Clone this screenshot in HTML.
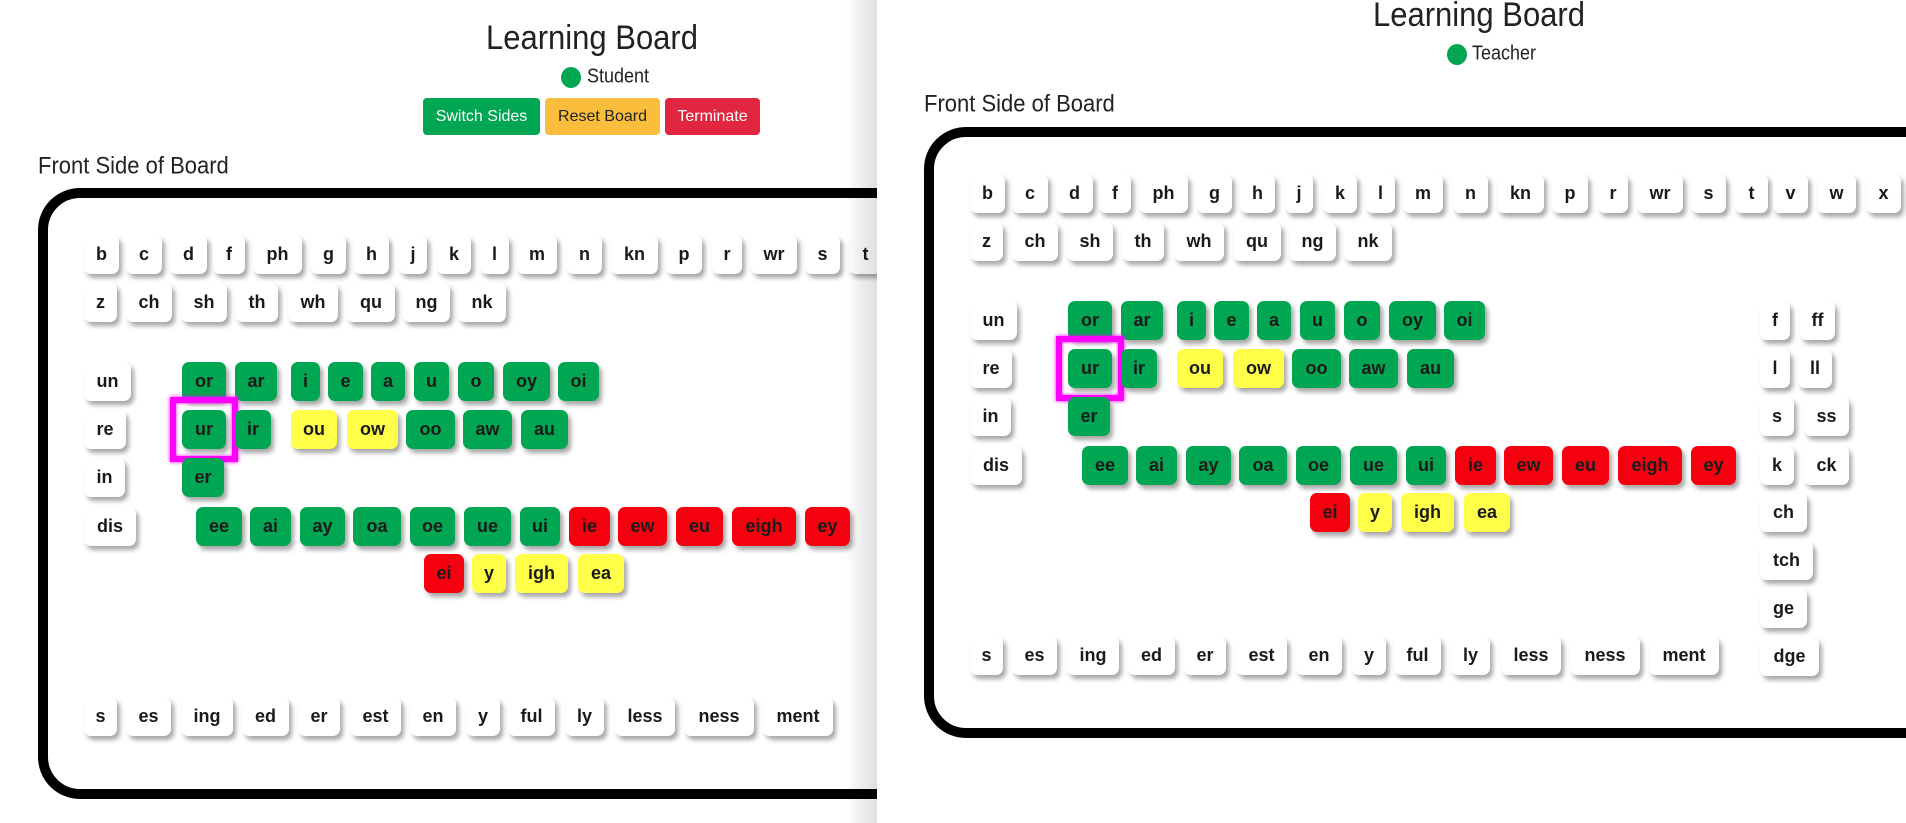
<!DOCTYPE html>
<html><head><meta charset="utf-8"><style>
*{margin:0;padding:0;box-sizing:border-box}
body{width:1906px;height:823px;overflow:hidden;background:#fff;font-family:"Liberation Sans",Arial,sans-serif;color:#222;position:relative}
.panel{position:absolute;top:0;height:823px;overflow:hidden;background:#fff}
.title{position:absolute;font-size:31px;white-space:nowrap;transform:translateX(-50%) scaleY(1.12);color:#222}
.dot{position:absolute;width:20px;height:21px;border-radius:50%;background:#00a651}
.role{position:absolute;font-size:18px;transform:scaleY(1.12);transform-origin:left center}
.btn{position:absolute;top:98px;height:37px;line-height:37px;text-align:center;font-size:16px;border-radius:4px;color:#fff}
.lbl{position:absolute;font-size:22px;transform:scaleY(1.1);transform-origin:left center;white-space:nowrap}
.board{position:absolute;border:10px solid #000;border-radius:42px;width:1100px;height:611px;background:#fff}
.t{position:absolute;height:39px;line-height:39px;text-align:center;font-weight:bold;font-size:18px;border-radius:7px;background:#fff;box-shadow:3px 4px 5px rgba(0,0,0,.35);color:#1a1a1a;white-space:nowrap}
.g{background:#00a651}.y{background:#ffff4a}.r{background:#f5000f}
.hl{position:absolute;left:122px;top:199px;width:68px;height:65px;border:6px solid #ff00ff;box-shadow:0 0 4px #ff00ff, inset 0 0 3px #ff00ff}
</style></head><body>

<div class="panel" style="left:0;width:877px">
  <div class="title" style="left:592px;top:20px">Learning Board</div>
  <div class="dot" style="left:561px;top:67px"></div>
  <div class="role" style="left:587px;top:66px">Student</div>
  <div class="btn" style="left:423px;width:117px;background:#00a651">Switch Sides</div>
  <div class="btn" style="left:545px;width:115px;background:#fbbd3c;color:#222">Reset Board</div>
  <div class="btn" style="left:665px;width:95px;background:#e3263f">Terminate</div>
  <div class="lbl" style="left:38px;top:153px">Front Side of Board</div>
  <div class="board" style="left:38px;top:188px">
<div class="t" style="left:36px;top:37px;width:35px">b</div><div class="t" style="left:78px;top:37px;width:36px">c</div><div class="t" style="left:122px;top:37px;width:37px">d</div><div class="t" style="left:165px;top:37px;width:32px">f</div><div class="t" style="left:205px;top:37px;width:49px">ph</div><div class="t" style="left:263px;top:37px;width:35px">g</div><div class="t" style="left:306px;top:37px;width:35px">h</div><div class="t" style="left:351px;top:37px;width:28px">j</div><div class="t" style="left:389px;top:37px;width:34px">k</div><div class="t" style="left:432px;top:37px;width:29px">l</div><div class="t" style="left:469px;top:37px;width:40px">m</div><div class="t" style="left:519px;top:37px;width:35px">n</div><div class="t" style="left:563px;top:37px;width:47px">kn</div><div class="t" style="left:618px;top:37px;width:36px">p</div><div class="t" style="left:664px;top:37px;width:30px">r</div><div class="t" style="left:703px;top:37px;width:46px">wr</div><div class="t" style="left:757px;top:37px;width:35px">s</div><div class="t" style="left:801px;top:37px;width:33px">t</div><div class="t" style="left:839px;top:37px;width:35px">v</div><div class="t" style="left:883px;top:37px;width:39px">w</div><div class="t" style="left:932px;top:37px;width:35px">x</div><div class="t" style="left:976px;top:37px;width:35px">y</div><div class="t" style="left:1020px;top:37px;width:35px">z</div>
<div class="t" style="left:36px;top:85px;width:33px">z</div><div class="t" style="left:78px;top:85px;width:46px">ch</div><div class="t" style="left:133px;top:85px;width:46px">sh</div><div class="t" style="left:188px;top:85px;width:42px">th</div><div class="t" style="left:240px;top:85px;width:50px">wh</div><div class="t" style="left:299px;top:85px;width:48px">qu</div><div class="t" style="left:355px;top:85px;width:47px">ng</div><div class="t" style="left:410px;top:85px;width:48px">nk</div>
<div class="t" style="left:36px;top:164px;width:47px">un</div><div class="t" style="left:36px;top:212px;width:42px">re</div><div class="t" style="left:36px;top:260px;width:41px">in</div><div class="t" style="left:36px;top:309px;width:52px">dis</div>
<div class="t g" style="left:134px;top:164px;width:44px">or</div><div class="t g" style="left:187px;top:164px;width:42px">ar</div><div class="t g" style="left:243px;top:164px;width:29px">i</div><div class="t g" style="left:280px;top:164px;width:35px">e</div><div class="t g" style="left:323px;top:164px;width:34px">a</div><div class="t g" style="left:366px;top:164px;width:35px">u</div><div class="t g" style="left:410px;top:164px;width:36px">o</div><div class="t g" style="left:455px;top:164px;width:47px">oy</div><div class="t g" style="left:510px;top:164px;width:41px">oi</div>
<div class="hl"></div>
<div class="t g" style="left:134px;top:212px;width:44px">ur</div><div class="t g" style="left:187px;top:212px;width:36px">ir</div><div class="t y" style="left:243px;top:212px;width:46px">ou</div><div class="t y" style="left:299px;top:212px;width:51px">ow</div><div class="t g" style="left:358px;top:212px;width:49px">oo</div><div class="t g" style="left:415px;top:212px;width:49px">aw</div><div class="t g" style="left:473px;top:212px;width:47px">au</div>
<div class="t g" style="left:134px;top:260px;width:42px">er</div>
<div class="t g" style="left:148px;top:309px;width:46px">ee</div><div class="t g" style="left:202px;top:309px;width:41px">ai</div><div class="t g" style="left:252px;top:309px;width:45px">ay</div><div class="t g" style="left:305px;top:309px;width:48px">oa</div><div class="t g" style="left:362px;top:309px;width:45px">oe</div><div class="t g" style="left:416px;top:309px;width:47px">ue</div><div class="t g" style="left:472px;top:309px;width:40px">ui</div><div class="t r" style="left:521px;top:309px;width:41px">ie</div><div class="t r" style="left:570px;top:309px;width:49px">ew</div><div class="t r" style="left:628px;top:309px;width:47px">eu</div><div class="t r" style="left:684px;top:309px;width:64px">eigh</div><div class="t r" style="left:757px;top:309px;width:45px">ey</div>
<div class="t r" style="left:376px;top:356px;width:40px">ei</div><div class="t y" style="left:424px;top:356px;width:34px">y</div><div class="t y" style="left:467px;top:356px;width:53px">igh</div><div class="t y" style="left:530px;top:356px;width:46px">ea</div>
<div class="t" style="left:36px;top:499px;width:33px">s</div><div class="t" style="left:78px;top:499px;width:45px">es</div><div class="t" style="left:133px;top:499px;width:52px">ing</div><div class="t" style="left:194px;top:499px;width:47px">ed</div><div class="t" style="left:250px;top:499px;width:42px">er</div><div class="t" style="left:302px;top:499px;width:51px">est</div><div class="t" style="left:362px;top:499px;width:46px">en</div><div class="t" style="left:418px;top:499px;width:34px">y</div><div class="t" style="left:460px;top:499px;width:47px">ful</div><div class="t" style="left:517px;top:499px;width:39px">ly</div><div class="t" style="left:567px;top:499px;width:60px">less</div><div class="t" style="left:636px;top:499px;width:70px">ness</div><div class="t" style="left:715px;top:499px;width:70px">ment</div>
  </div>
  <div style="position:absolute;left:845px;top:0;width:32px;height:823px;background:linear-gradient(to right,rgba(0,0,0,0),rgba(0,0,0,.13))"></div>
</div>

<div class="panel" style="left:877px;width:1029px">
  <div class="title" style="left:602px;top:-3px">Learning Board</div>
  <div class="dot" style="left:570px;top:44px"></div>
  <div class="role" style="left:595px;top:43px">Teacher</div>
  <div class="lbl" style="left:47px;top:91px">Front Side of Board</div>
  <div class="board" style="left:47px;top:127px">
<div class="t" style="left:36px;top:37px;width:35px">b</div><div class="t" style="left:78px;top:37px;width:36px">c</div><div class="t" style="left:122px;top:37px;width:37px">d</div><div class="t" style="left:165px;top:37px;width:32px">f</div><div class="t" style="left:205px;top:37px;width:49px">ph</div><div class="t" style="left:263px;top:37px;width:35px">g</div><div class="t" style="left:306px;top:37px;width:35px">h</div><div class="t" style="left:351px;top:37px;width:28px">j</div><div class="t" style="left:389px;top:37px;width:34px">k</div><div class="t" style="left:432px;top:37px;width:29px">l</div><div class="t" style="left:469px;top:37px;width:40px">m</div><div class="t" style="left:519px;top:37px;width:35px">n</div><div class="t" style="left:563px;top:37px;width:47px">kn</div><div class="t" style="left:618px;top:37px;width:36px">p</div><div class="t" style="left:664px;top:37px;width:30px">r</div><div class="t" style="left:703px;top:37px;width:46px">wr</div><div class="t" style="left:757px;top:37px;width:35px">s</div><div class="t" style="left:801px;top:37px;width:33px">t</div><div class="t" style="left:839px;top:37px;width:35px">v</div><div class="t" style="left:883px;top:37px;width:39px">w</div><div class="t" style="left:932px;top:37px;width:35px">x</div><div class="t" style="left:976px;top:37px;width:35px">y</div><div class="t" style="left:1020px;top:37px;width:35px">z</div>
<div class="t" style="left:36px;top:85px;width:33px">z</div><div class="t" style="left:78px;top:85px;width:46px">ch</div><div class="t" style="left:133px;top:85px;width:46px">sh</div><div class="t" style="left:188px;top:85px;width:42px">th</div><div class="t" style="left:240px;top:85px;width:50px">wh</div><div class="t" style="left:299px;top:85px;width:48px">qu</div><div class="t" style="left:355px;top:85px;width:47px">ng</div><div class="t" style="left:410px;top:85px;width:48px">nk</div>
<div class="t" style="left:36px;top:164px;width:47px">un</div><div class="t" style="left:36px;top:212px;width:42px">re</div><div class="t" style="left:36px;top:260px;width:41px">in</div><div class="t" style="left:36px;top:309px;width:52px">dis</div>
<div class="t g" style="left:134px;top:164px;width:44px">or</div><div class="t g" style="left:187px;top:164px;width:42px">ar</div><div class="t g" style="left:243px;top:164px;width:29px">i</div><div class="t g" style="left:280px;top:164px;width:35px">e</div><div class="t g" style="left:323px;top:164px;width:34px">a</div><div class="t g" style="left:366px;top:164px;width:35px">u</div><div class="t g" style="left:410px;top:164px;width:36px">o</div><div class="t g" style="left:455px;top:164px;width:47px">oy</div><div class="t g" style="left:510px;top:164px;width:41px">oi</div>
<div class="hl"></div>
<div class="t g" style="left:134px;top:212px;width:44px">ur</div><div class="t g" style="left:187px;top:212px;width:36px">ir</div><div class="t y" style="left:243px;top:212px;width:46px">ou</div><div class="t y" style="left:299px;top:212px;width:51px">ow</div><div class="t g" style="left:358px;top:212px;width:49px">oo</div><div class="t g" style="left:415px;top:212px;width:49px">aw</div><div class="t g" style="left:473px;top:212px;width:47px">au</div>
<div class="t g" style="left:134px;top:260px;width:42px">er</div>
<div class="t g" style="left:148px;top:309px;width:46px">ee</div><div class="t g" style="left:202px;top:309px;width:41px">ai</div><div class="t g" style="left:252px;top:309px;width:45px">ay</div><div class="t g" style="left:305px;top:309px;width:48px">oa</div><div class="t g" style="left:362px;top:309px;width:45px">oe</div><div class="t g" style="left:416px;top:309px;width:47px">ue</div><div class="t g" style="left:472px;top:309px;width:40px">ui</div><div class="t r" style="left:521px;top:309px;width:41px">ie</div><div class="t r" style="left:570px;top:309px;width:49px">ew</div><div class="t r" style="left:628px;top:309px;width:47px">eu</div><div class="t r" style="left:684px;top:309px;width:64px">eigh</div><div class="t r" style="left:757px;top:309px;width:45px">ey</div>
<div class="t r" style="left:376px;top:356px;width:40px">ei</div><div class="t y" style="left:424px;top:356px;width:34px">y</div><div class="t y" style="left:467px;top:356px;width:53px">igh</div><div class="t y" style="left:530px;top:356px;width:46px">ea</div>
<div class="t" style="left:826px;top:164px;width:30px">f</div><div class="t" style="left:866px;top:164px;width:35px">ff</div><div class="t" style="left:826px;top:212px;width:30px">l</div><div class="t" style="left:864px;top:212px;width:34px">ll</div><div class="t" style="left:826px;top:260px;width:34px">s</div><div class="t" style="left:870px;top:260px;width:45px">ss</div><div class="t" style="left:826px;top:309px;width:34px">k</div><div class="t" style="left:870px;top:309px;width:45px">ck</div><div class="t" style="left:826px;top:356px;width:47px">ch</div><div class="t" style="left:826px;top:404px;width:53px">tch</div><div class="t" style="left:826px;top:452px;width:47px">ge</div><div class="t" style="left:826px;top:500px;width:59px">dge</div>
<div class="t" style="left:36px;top:499px;width:33px">s</div><div class="t" style="left:78px;top:499px;width:45px">es</div><div class="t" style="left:133px;top:499px;width:52px">ing</div><div class="t" style="left:194px;top:499px;width:47px">ed</div><div class="t" style="left:250px;top:499px;width:42px">er</div><div class="t" style="left:302px;top:499px;width:51px">est</div><div class="t" style="left:362px;top:499px;width:46px">en</div><div class="t" style="left:418px;top:499px;width:34px">y</div><div class="t" style="left:460px;top:499px;width:47px">ful</div><div class="t" style="left:517px;top:499px;width:39px">ly</div><div class="t" style="left:567px;top:499px;width:60px">less</div><div class="t" style="left:636px;top:499px;width:70px">ness</div><div class="t" style="left:715px;top:499px;width:70px">ment</div>
  </div>
</div>
</body></html>
